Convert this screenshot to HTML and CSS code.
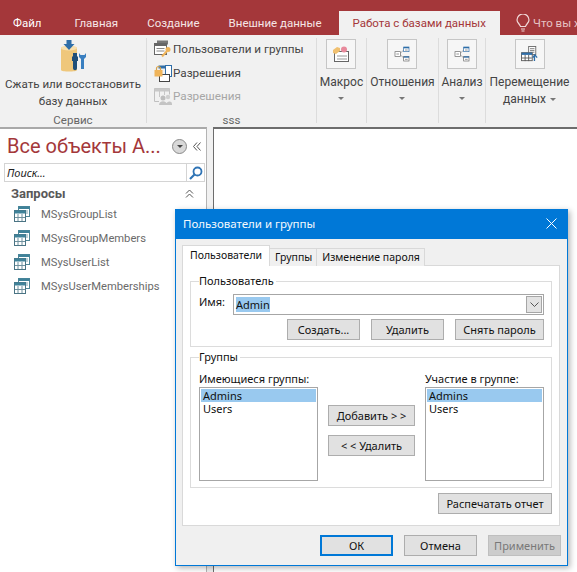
FILE: index.html
```html
<!DOCTYPE html>
<html lang="ru">
<head>
    <meta charset="UTF-8">
    <title>Пользователи и группы</title>
    <link rel="stylesheet" href="styles.css">
</head>
<body>
    <svg class="defs" width="0" height="0">
        <symbol id="rel" viewBox="0 0 24 24">
            <path d="M8 12 L17 4 M8 12 L17 20" stroke="#8a8a8a" fill="none"/>
            <rect x="1.5" y="8.5" width="8" height="7" fill="#fff" stroke="#666"/>
            <path d="M3.5 12h4" stroke="#666"/>
            <rect x="14.500" y="1.500" width="8" height="7" fill="#fff" stroke="#2f6ea8"/>
            <rect x="14.500" y="1.500" width="8" height="2" fill="#2f6ea8"/>
            <path d="M16.500 6h4" stroke="#666"/>
            <rect x="14.500" y="15.500" width="8" height="7" fill="#fff" stroke="#666"/>
            <rect x="14.500" y="15.500" width="8" height="2" fill="#2f6ea8"/>
            <path d="M16.500 20h4" stroke="#666"/>
        </symbol>
        <symbol id="query" viewBox="0 0 16 16">
            <rect x="4.500" y="0.500" width="11" height="10" fill="#fff" stroke="#4f8798"/>
            <rect x="4.500" y="0.500" width="11" height="2.500" fill="#3f8299"/>
            <path d="M9 5h5M9 7h5" stroke="#7ba3b0"/>
            <rect x="0.500" y="4.500" width="11" height="11" fill="#fff" stroke="#4a7484"/>
            <rect x="0.500" y="4.500" width="11" height="3" fill="#3f8299"/>
            <path d="M4 8v7M8 8v7M1 11.500h10" stroke="#6f919e"/>
        </symbol>
    </svg>

    <div class="tabbar">
        <span class="tab tab-file">Файл</span>
        <span class="tab">Главная</span>
        <span class="tab">Создание</span>
        <span class="tab">Внешние данные</span>
        <span class="tab tab-active">Работа с базами данных</span>
        <svg class="bulb" width="14" height="18" viewBox="0 0 14 18">
            <path d="M4.500 12.500C4 10 1 9 1 6a6 6 0 0 1 12 0c0 3-3 4-3.500 6.500z" fill="none" stroke="#f0d8d8" stroke-width="1.200"/>
            <path d="M5 15h4M5.500 17h3" stroke="#f0d8d8" stroke-width="1.200"/>
        </svg>
        <span class="tell">Что вы х</span>
    </div>

    <div class="ribbon">
        <div class="group group-tools">
            <div class="big-item">
                <svg class="compact-icon" width="26" height="35" viewBox="0 0 26 35">
                    <path d="M1 8c0-2 16-2 16 0v22c0 2-16 2-16 0z" fill="#efc77b"/>
                    <ellipse cx="9" cy="8" rx="8" ry="2.500" fill="#f7dfae"/>
                    <path d="M6.500 0h5v4h3l-5.500 6-5.500-6h3z" fill="#2f6ea8"/>
                    <path d="M15 13h2v3l1 1v4h-1v7c0 3-4 3-4 0v-7h-1v-4l1-1v-3h2z" fill="#1f4e79"/>
                    <path d="M19 13v4l2 2v10h3V19l2-2v-4l-1.500 2h-4z" fill="#3a7fc0"/>
                </svg>
                <div class="big-label">Сжать или восстановить<br>базу данных</div>
            </div>
            <div class="group-name">Сервис</div>
        </div>
        <div class="group group-sss">
            <div class="small-list">
                <div class="small-item">
                    <svg width="18" height="18" viewBox="0 0 18 18">
                        <rect x="3" y="0.500" width="11" height="4" fill="#777"/>
                        <rect x="0.500" y="3.500" width="12" height="11" fill="#fff" stroke="#666"/>
                        <rect x="0.500" y="3.500" width="12" height="2.500" fill="#666"/>
                        <path d="M2.500 8.500h8M2.500 11h8" stroke="#888"/>
                        <circle cx="14" cy="9.500" r="2.500" fill="#efb45a"/>
                        <path d="M13 11l-5 5.500" stroke="#efb45a" stroke-width="2"/>
                    </svg>
                    <span>Пользователи и группы</span>
                </div>
                <div class="small-item">
                    <svg width="18" height="18" viewBox="0 0 18 18">
                        <rect x="4.500" y="1.500" width="13" height="3" fill="#2f6ea8"/>
                        <rect x="11.500" y="1.500" width="6" height="11" fill="#fff" stroke="#2f6ea8"/>
                        <rect x="5.500" y="10.500" width="10" height="7" fill="#fff" stroke="#444"/>
                        <path d="M2.500 6V4.500a2 2 0 0 1 4 0V6" fill="none" stroke="#d8a24a" stroke-width="1.200"/>
                        <rect x="0.500" y="6" width="8" height="6.500" fill="#efb45a"/>
                    </svg>
                    <span>Разрешения</span>
                </div>
                <div class="small-item item-off">
                    <svg width="18" height="18" viewBox="0 0 18 18">
                        <path d="M5 14.500H0.500V1.500h15v6" fill="none" stroke="#c0c0c0"/>
                        <rect x="0.500" y="1.500" width="15" height="3" fill="#c8c8c8"/>
                        <path d="M5.500 4v6M10.500 4v4" stroke="#c8c8c8"/>
                        <circle cx="9" cy="11" r="2.500" fill="#bdbdbd"/>
                        <circle cx="14" cy="10" r="2.200" fill="#cfcfcf"/>
                        <path d="M5 18c0-5 8-5 8 0zM12 18c0-4 6-5 6-1v1z" fill="#c4c4c4"/>
                    </svg>
                    <span>Разрешения</span>
                </div>
            </div>
            <div class="group-name">sss</div>
        </div>
        <div class="group group-macro">
            <div class="big-item">
                <div class="icon-box">
                    <svg width="16" height="16" viewBox="0 0 16 16">
                        <rect x="1.500" y="5.500" width="14" height="10" fill="#fff" stroke="#666"/>
                        <path d="M4 10h10M4 13h10" stroke="#999"/>
                        <path d="M0 4l4-3 3 1v3l-4 3-3-1z" fill="#f0c070"/>
                        <circle cx="11" cy="3.500" r="3" fill="#e88a9c"/>
                    </svg>
                </div>
                <div class="big-label">Макрос</div>
                <div class="drop"></div>
            </div>
        </div>
        <div class="group group-rel">
            <div class="big-item">
                <div class="icon-box"><svg width="16" height="16"><use href="#rel"/></svg></div>
                <div class="big-label">Отношения</div>
                <div class="drop"></div>
            </div>
        </div>
        <div class="group group-an">
            <div class="big-item">
                <div class="icon-box"><svg width="16" height="16"><use href="#rel"/></svg></div>
                <div class="big-label">Анализ</div>
                <div class="drop"></div>
            </div>
        </div>
        <div class="group group-move">
            <div class="big-item">
                <div class="icon-box">
                    <svg width="18" height="16" viewBox="0 0 20 18">
                        <rect x="8.500" y="0.500" width="8" height="9" fill="#fff" stroke="#666"/>
                        <path d="M10 3h5M10 5h5M10 7h5" stroke="#777"/>
                        <rect x="0.500" y="7.500" width="12" height="9" fill="#fff" stroke="#555"/>
                        <rect x="0.500" y="7.500" width="12" height="2.500" fill="#2f6ea8"/>
                        <path d="M4.500 10v7M8.500 10v7M1 13.500h11" stroke="#555"/>
                        <path d="M15 17v-6M13 13l2.500-3 2.500 3" fill="none" stroke="#2f6ea8" stroke-width="1.500"/>
                    </svg>
                </div>
                <div class="big-label">Перемещение<br>данных <span class="drop drop-inline"></span></div>
            </div>
        </div>
    </div>

    <div class="workspace">
        <div class="nav">
            <div class="nav-head">
                <span class="nav-title">Все объекты А...</span>
                <span class="nav-round"><span class="drop drop-dark"></span></span>
                <svg class="nav-collapse" width="8" height="9" viewBox="0 0 8 9">
                    <path d="M4 0.500L0.500 4.500 4 8.500M7.500 0.500L4 4.500l3.500 4" fill="none" stroke="#555"/>
                </svg>
            </div>
            <div class="search">
                <span class="search-text">Поиск...</span>
                <span class="search-btn">
                    <svg width="14" height="14" viewBox="0 0 14 14">
                        <circle cx="8.500" cy="5.500" r="4" fill="none" stroke="#2f74b5" stroke-width="1.800"/>
                        <path d="M5.500 8.500L1 13" stroke="#2f74b5" stroke-width="2.200"/>
                    </svg>
                </span>
            </div>
            <div class="nav-section">
                <span>Запросы</span>
                <svg width="9" height="9" viewBox="0 0 9 9">
                    <path d="M1 4.500l3.500-3.500 3.500 3.500M1 8.500l3.500-3.500 3.500 3.500" fill="none" stroke="#555"/>
                </svg>
            </div>
            <div class="nav-item"><svg width="16" height="16"><use href="#query"/></svg><span>MSysGroupList</span></div>
            <div class="nav-item"><svg width="16" height="16"><use href="#query"/></svg><span>MSysGroupMembers</span></div>
            <div class="nav-item"><svg width="16" height="16"><use href="#query"/></svg><span>MSysUserList</span></div>
            <div class="nav-item"><svg width="16" height="16"><use href="#query"/></svg><span>MSysUserMemberships</span></div>
        </div>
        <div class="splitter"></div>
        <div class="doc"></div>
    </div>

    <div class="dialog">
        <div class="dialog-title">
            <span>Пользователи и группы</span>
            <svg width="11" height="11" viewBox="0 0 11 11">
                <path d="M0.500 0.500l10 10M10.500 0.500l-10 10" stroke="#fff"/>
            </svg>
        </div>
        <div class="dialog-body">
            <div class="dlg-tabs">
                <span class="dlg-tab dlg-tab-on">Пользователи</span>
                <span class="dlg-tab">Группы</span>
                <span class="dlg-tab">Изменение пароля</span>
            </div>
            <div class="dlg-panel">
                <fieldset class="box box-user">
                    <legend>Пользователь</legend>
                    <div class="name-row">
                        <span>Имя:</span>
                        <div class="combo">
                            <span class="combo-val">Admin</span>
                            <span class="combo-btn">
                                <svg width="9" height="5" viewBox="0 0 9 5"><path d="M0.500 0.500l4 4 4-4" fill="none" stroke="#555"/></svg>
                            </span>
                        </div>
                    </div>
                    <div class="user-btns">
                        <button class="btn btn-w73">Создать...</button>
                        <button class="btn btn-w73">Удалить</button>
                        <button class="btn btn-w89">Снять пароль</button>
                    </div>
                </fieldset>
                <fieldset class="box box-groups">
                    <legend>Группы</legend>
                    <div class="groups-grid">
                        <div class="list-col">
                            <div class="list-label">Имеющиеся группы:</div>
                            <div class="listbox">
                                <div class="list-row row-sel">Admins</div>
                                <div class="list-row">Users</div>
                            </div>
                        </div>
                        <div class="move-col">
                            <button class="btn btn-move">Добавить &gt; &gt;</button>
                            <button class="btn btn-move">&lt; &lt; Удалить</button>
                        </div>
                        <div class="list-col">
                            <div class="list-label">Участие в группе:</div>
                            <div class="listbox">
                                <div class="list-row row-sel">Admins</div>
                                <div class="list-row">Users</div>
                            </div>
                        </div>
                    </div>
                </fieldset>
                <div class="print-row"><button class="btn btn-print">Распечатать отчет</button></div>
            </div>
            <div class="dlg-foot">
                <button class="btn btn-w73 btn-ok">ОК</button>
                <button class="btn btn-w73">Отмена</button>
                <button class="btn btn-w73 btn-off">Применить</button>
            </div>
        </div>
    </div>
</body>
</html>
```

FILE: styles.css
```css
/* page */
html, body {
    margin: 0;
    height: 572px;
    overflow: hidden;
}

body {
    font-family: Roboto, "Noto Sans", sans-serif;
    font-size: 12px;
    background: #fff;
    color: #333;
    display: flex;
    flex-direction: column;
}

.defs {
    position: absolute;
}

/* tabs on top */
.tabbar {
    height: 35px;
    flex: none;
    box-sizing: border-box;
    padding-top: 11px;
    background: #a4373a;
    display: flex;
    align-items: stretch;
    font-size: 11.5px;
    color: #f6e6e6;
    overflow: hidden;
}

.tab {
    padding: 0 14.5px;
    line-height: 24px;
    white-space: nowrap;
}

.tab-file {
    padding: 0 18.5px 0 13px;
    color: #fff;
}

.tab-active {
    background: #f1f1f1;
    color: #a4373a;
    padding: 0 14px;
    margin-left: 2.5px;
    margin-right: 16px;
}

.bulb {
    margin-top: 3px;
    flex: none;
}

.tell {
    margin-left: 3px;
    line-height: 24px;
    white-space: nowrap;
    color: #e6c4c4;
}

/* ribbon */
.ribbon {
    height: 92px;
    flex: none;
    box-sizing: border-box;
    padding-top: 3px;
    background: #f1f1f1;
    display: flex;
    overflow: hidden;
}

.group {
    flex: none;
    box-sizing: border-box;
    height: 85px;
    border-right: 1px solid #dcdcdc;
    display: flex;
    flex-direction: column;
    align-items: center;
    position: relative;
}

.group-tools { width: 147px; }
.group-sss { width: 170px; }
.group-macro { width: 50px; }
.group-rel { width: 72px; }
.group-an { width: 47px; }
.group-move { width: 87px; border-right: 0; }

.group-name {
    position: absolute;
    bottom: -4px;
    left: 0;
    right: 0;
    text-align: center;
    font-size: 11.5px;
    color: #666;
}

.big-item {
    display: flex;
    flex-direction: column;
    align-items: center;
    padding-top: 1px;
}

.big-label {
    text-align: center;
    line-height: 17px;
    white-space: nowrap;
    color: #444;
}

.group-tools .big-label {
    font-size: 11.6px;
}

.compact-icon {
    margin: 1px 0 1px;
}

.icon-box {
    width: 28px;
    height: 28px;
    border: 1px solid #c6c6c6;
    background: #f6f6f6;
    display: flex;
    align-items: center;
    justify-content: center;
    margin-bottom: 5px;
}

.drop {
    width: 0;
    height: 0;
    border: 3px solid transparent;
    border-top: 3px solid #777;
    border-bottom: 0;
    margin-top: 6px;
}

.drop-inline {
    display: inline-block;
    margin: 0 0 2px 1px;
}

.drop-dark {
    margin: 0;
    border-top-color: #444;
}

.small-list {
    align-self: stretch;
    padding: 2px 0 0 7px;
    display: flex;
    flex-direction: column;
    gap: 5.5px;
}

.small-item {
    display: flex;
    align-items: center;
    gap: 1px;
    height: 18px;
    font-size: 11.7px;
    white-space: nowrap;
    color: #444;
}

.item-off {
    color: #a6a6a6;
}

/* left pane and document */
.workspace {
    flex: 1;
    display: flex;
    min-height: 0;
}

.nav {
    width: 207px;
    flex: none;
    box-sizing: border-box;
    border-top: 2px solid #a9a9a9;
    border-right: 1px solid #b4b4b4;
    padding: 0 1px 0 4px;
}

.nav-head {
    height: 34px;
    display: flex;
    align-items: center;
    padding-left: 3px;
}

.nav-title {
    font-size: 20px;
    color: #a4373a;
    white-space: nowrap;
    width: 165px;
}

.nav-round {
    width: 13px;
    height: 13px;
    background: #d8d8d8;
    border: 1px solid #8a8a8a;
    border-radius: 50%;
    display: flex;
    align-items: center;
    justify-content: center;
}

.nav-collapse {
    margin-left: 6px;
}

.search {
    height: 19px;
    box-sizing: border-box;
    border: 1px solid #d4d4d4;
    display: flex;
    align-items: center;
    justify-content: space-between;
}

.search-text {
    font-family: "Noto Sans", sans-serif;
    font-size: 11px;
    font-style: italic;
    color: #222;
    padding-left: 2px;
}

.search-btn {
    width: 17px;
    height: 17px;
    border-left: 1px solid #d4d4d4;
    display: flex;
    align-items: center;
    justify-content: center;
}

.nav-section {
    height: 22px;
    margin-bottom: -2px;
    display: flex;
    align-items: center;
    justify-content: space-between;
    padding: 0 11px 0 7px;
    font-size: 13px;
    font-weight: bold;
    color: #595959;
}

.nav-item {
    height: 24px;
    display: flex;
    align-items: center;
    gap: 11px;
    padding-left: 10px;
    font-size: 11.2px;
    color: #6a6a6a;
    white-space: nowrap;
}

.splitter {
    width: 6px;
    flex: none;
    background: #f1f1f1;
}

.doc {
    flex: 1;
    border-top: 2px solid #6d6d6d;
    border-left: 1px solid #6d6d6d;
}

/* dialog floats over the workspace */
.dialog {
    position: absolute;
    left: 175px;
    top: 209px;
    width: 393px;
    height: 357px;
    box-sizing: border-box;
    border: 1px solid #0078d7;
    border-top: 0;
    background: #f0f0f0;
    box-shadow: 2px 2px 6px rgba(0, 0, 0, 0.3);
    display: flex;
    flex-direction: column;
    font-family: "Noto Sans", sans-serif;
    font-size: 11px;
    color: #111;
}

.dialog-title {
    height: 29px;
    flex: none;
    background: #0078d7;
    color: #f4f9fd;
    font-size: 11.5px;
    display: flex;
    align-items: center;
    justify-content: space-between;
    padding: 0 10px 1px 7px;
}

.dialog-body {
    flex: 1;
    padding: 7px 7px 0 6px;
}

.dlg-tabs {
    display: flex;
    align-items: flex-end;
    height: 20px;
    position: relative;
    margin-bottom: -1px;
}

.dlg-tab {
    height: 18px;
    line-height: 17px;
    font-size: 10.5px;
    box-sizing: border-box;
    padding: 0 4px 0 5px;
    background: #f0f0f0;
    border: 1px solid #d9d9d9;
    border-bottom: 0;
    margin-left: -1px;
    white-space: nowrap;
}

.dlg-tab:first-child {
    margin-left: 0;
}

.dlg-tab-on {
    height: 21px;
    line-height: 19px;
    background: #fff;
    padding: 0 7px;
    position: relative;
    z-index: 1;
}

.dlg-panel {
    background: #fff;
    border: 1px solid #d9d9d9;
    height: 261px;
    box-sizing: border-box;
    padding: 8px 7px 0;
}

.box {
    margin: 0;
    padding: 0;
    border: 1px solid #dcdcdc;
    min-width: 0;
}

.box legend {
    padding: 0 2px 0 0;
    line-height: 14px;
}

.box-user {
    height: 73px;
    box-sizing: border-box;
    padding: 6px 7px 0 8px;
}

.box-groups {
    height: 138px;
    box-sizing: border-box;
    margin-top: 3px;
    padding: 0 7px 0 8px;
}

.name-row {
    display: flex;
    justify-content: space-between;
}

.name-row > span {
    line-height: 14px;
    margin-top: 1px;
}

.combo {
    width: 311px;
    height: 21px;
    box-sizing: border-box;
    border: 1px solid #a6a6a6;
    display: flex;
    align-items: center;
    justify-content: space-between;
    padding: 0 1px 0 2px;
    background: #fff;
}

.combo-val {
    background: #99c9ef;
    line-height: 15px;
}

.combo-btn {
    width: 16px;
    height: 17px;
    background: #e3e3e3;
    border: 1px solid #a6a6a6;
    box-sizing: border-box;
    display: flex;
    align-items: center;
    justify-content: center;
}

.user-btns {
    display: flex;
    justify-content: flex-end;
    gap: 11px;
    margin-top: 4px;
}

.btn {
    font-family: inherit;
    font-size: 11px;
    color: #111;
    height: 21px;
    padding: 0;
    box-sizing: border-box;
    background: #e1e1e1;
    border: 1px solid #adadad;
    white-space: nowrap;
}

.btn-w73 { width: 73px; }
.btn-w89 { width: 89px; }

.groups-grid {
    display: flex;
    justify-content: space-between;
    margin-top: 8px;
}

.list-col {
    width: 119px;
}

.list-label {
    line-height: 14px;
    margin-bottom: 1px;
}

.listbox {
    height: 94px;
    box-sizing: border-box;
    border: 1px solid #a6a6a6;
    padding: 1px;
    background: #fff;
}

.list-row {
    height: 13px;
    line-height: 13px;
    padding-left: 2px;
}

.row-sel {
    background: #99c9ef;
}

.move-col {
    display: flex;
    flex-direction: column;
    gap: 9px;
    padding-top: 33px;
}

.btn-move {
    width: 87px;
}

.print-row {
    display: flex;
    justify-content: flex-end;
    margin-top: 5px;
}

.btn-print {
    width: 114px;
}

.dlg-foot {
    display: flex;
    justify-content: flex-end;
    gap: 11px;
    margin-right: -1px;
    padding-top: 9px;
}

.btn-ok {
    border: 2px solid #0078d7;
}

.btn-off {
    background: #ccc;
    border-color: #bfbfbf;
    color: #787878;
}
```
